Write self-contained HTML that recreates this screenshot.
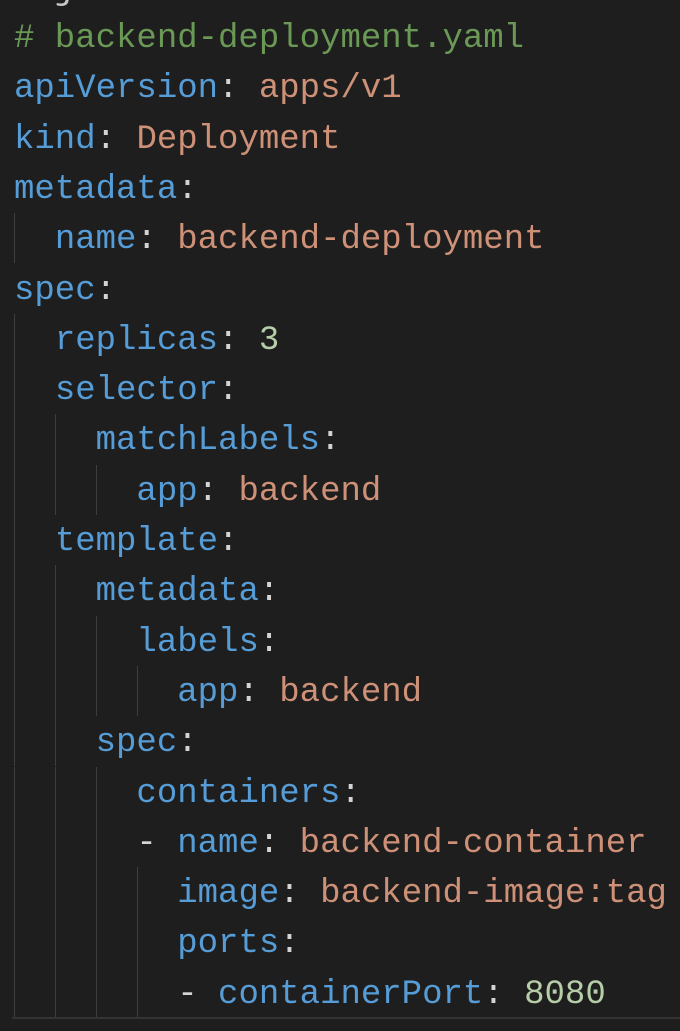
<!DOCTYPE html>
<html><head><meta charset="utf-8"><style>
html,body{margin:0;padding:0;background:#1e1e1e;width:680px;height:1031px;overflow:hidden}
.l{position:absolute;left:0;width:680px;height:50.3px;line-height:50.3px;font-family:"Liberation Mono",monospace;font-size:34px;white-space:pre;color:#d4d4d4}
.t{position:absolute;left:14px;top:2px}
.g{position:absolute;top:0;width:1px;height:50.3px;background:#3e3e3e}
.k{color:#569cd6}.s{color:#ce9178}.c{color:#6a9955}.n{color:#b5cea8}
.bot{position:absolute;left:12px;top:1017px;width:668px;height:2px;background:#333}
</style></head><body>
<div class="l" style="top:-36.3px"><span class="t" style="color:#c8c8c8">umjson</span></div>
<div class="l" style="top:12px"><span class="t c"># backend-deployment.yaml</span></div>
<div class="l" style="top:62.3px"><span class="t"><span class="k">apiVersion</span>: <span class="s">apps/v1</span></span></div>
<div class="l" style="top:112.6px"><span class="t"><span class="k">kind</span>: <span class="s">Deployment</span></span></div>
<div class="l" style="top:162.9px"><span class="t"><span class="k">metadata</span>:</span></div>
<div class="l" style="top:213.2px"><i class="g" style="left:14px"></i><span class="t">  <span class="k">name</span>: <span class="s">backend-deployment</span></span></div>
<div class="l" style="top:263.5px"><span class="t"><span class="k">spec</span>:</span></div>
<div class="l" style="top:313.8px"><i class="g" style="left:14px"></i><span class="t">  <span class="k">replicas</span>: <span class="n">3</span></span></div>
<div class="l" style="top:364.1px"><i class="g" style="left:14px"></i><span class="t">  <span class="k">selector</span>:</span></div>
<div class="l" style="top:414.4px"><i class="g" style="left:14px"></i><i class="g" style="left:55px"></i><span class="t">    <span class="k">matchLabels</span>:</span></div>
<div class="l" style="top:464.7px"><i class="g" style="left:14px"></i><i class="g" style="left:55px"></i><i class="g" style="left:96px"></i><span class="t">      <span class="k">app</span>: <span class="s">backend</span></span></div>
<div class="l" style="top:515px"><i class="g" style="left:14px"></i><span class="t">  <span class="k">template</span>:</span></div>
<div class="l" style="top:565.3px"><i class="g" style="left:14px"></i><i class="g" style="left:55px"></i><span class="t">    <span class="k">metadata</span>:</span></div>
<div class="l" style="top:615.6px"><i class="g" style="left:14px"></i><i class="g" style="left:55px"></i><i class="g" style="left:96px"></i><span class="t">      <span class="k">labels</span>:</span></div>
<div class="l" style="top:665.9px"><i class="g" style="left:14px"></i><i class="g" style="left:55px"></i><i class="g" style="left:96px"></i><i class="g" style="left:137px"></i><span class="t">        <span class="k">app</span>: <span class="s">backend</span></span></div>
<div class="l" style="top:716.2px"><i class="g" style="left:14px"></i><i class="g" style="left:55px"></i><span class="t">    <span class="k">spec</span>:</span></div>
<div class="l" style="top:766.5px"><i class="g" style="left:14px"></i><i class="g" style="left:55px"></i><i class="g" style="left:96px"></i><span class="t">      <span class="k">containers</span>:</span></div>
<div class="l" style="top:816.8px"><i class="g" style="left:14px"></i><i class="g" style="left:55px"></i><i class="g" style="left:96px"></i><span class="t">      - <span class="k">name</span>: <span class="s">backend-container</span></span></div>
<div class="l" style="top:867.1px"><i class="g" style="left:14px"></i><i class="g" style="left:55px"></i><i class="g" style="left:96px"></i><i class="g" style="left:137px"></i><span class="t">        <span class="k">image</span>: <span class="s">backend-image:tag</span></span></div>
<div class="l" style="top:917.4px"><i class="g" style="left:14px"></i><i class="g" style="left:55px"></i><i class="g" style="left:96px"></i><i class="g" style="left:137px"></i><span class="t">        <span class="k">ports</span>:</span></div>
<div class="l" style="top:967.7px"><i class="g" style="left:14px"></i><i class="g" style="left:55px"></i><i class="g" style="left:96px"></i><i class="g" style="left:137px"></i><span class="t">        - <span class="k">containerPort</span>: <span class="n">8080</span></span></div>
<div class="bot"></div>
</body></html>
